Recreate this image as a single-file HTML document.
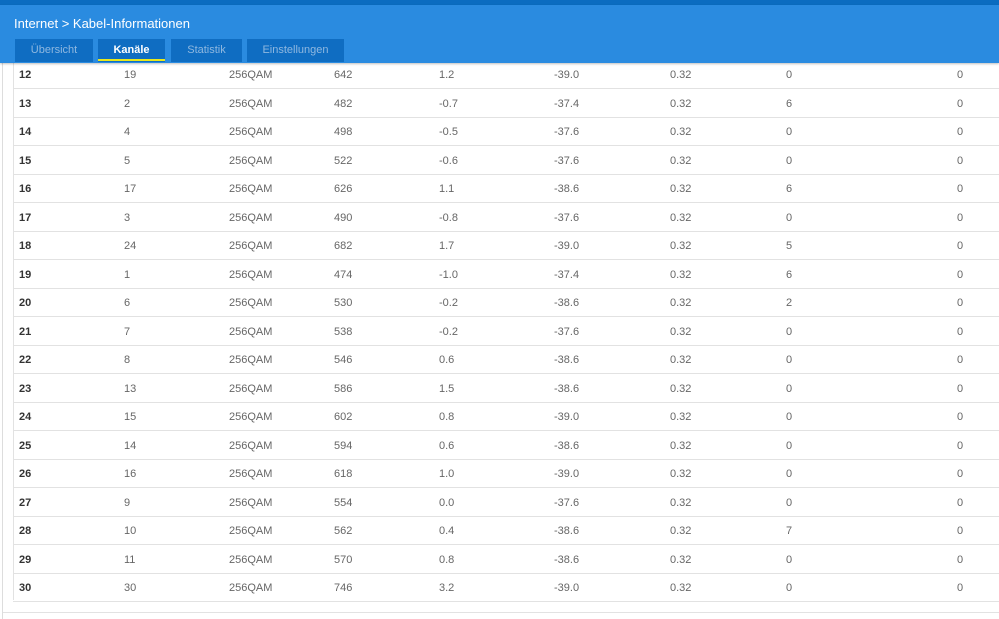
<!DOCTYPE html>
<html><head><style>
body{margin:0;width:999px;height:619px;overflow:hidden;background:#fff;font-family:"Liberation Sans",sans-serif;position:relative}
.top{position:absolute;left:0;top:0;width:999px;height:5px;background:#0b6cc0}
.hdr{position:absolute;left:0;top:5px;width:999px;height:58px;background:#2a8be0;box-shadow:0 1px 2px rgba(0,0,0,.25);z-index:2}
.title{position:absolute;left:14px;top:11px;color:#fff;font-size:13px}
.tab{position:absolute;top:34px;height:23px;background:#0f6dc2;color:#8fb8e0;font-size:11px;text-align:center;line-height:22px}
.tab.act{color:#fff;font-weight:bold}
.tab.act:after{content:"";position:absolute;left:0;right:0;bottom:1px;height:2px;background:#e8e81c}
.lft{position:absolute;left:2px;top:63px;width:1px;height:556px;background:#ddd}
.row{position:absolute;left:13px;width:986px;height:28px;border-bottom:1px solid #e2e2e2;font-size:11px;color:#666}
.row span{position:absolute;top:9px}
.row span:first-child{color:#333;font-weight:bold}
.tbl{position:absolute;left:13px;top:63px;width:1px;height:537px;background:#e2e2e2}
.bot{position:absolute;left:3px;top:612px;width:996px;height:1px;background:#e2e2e2}
</style></head><body>
<div class="top"></div>
<div class="hdr">
<div class="title">Internet &gt; Kabel-Informationen</div>
<div class="tab" style="left:15px;width:78px">Übersicht</div>
<div class="tab act" style="left:98px;width:67px">Kanäle</div>
<div class="tab" style="left:171px;width:71px">Statistik</div>
<div class="tab" style="left:247px;width:97px">Einstellungen</div>
</div>
<div class="lft"></div><div class="tbl"></div><div class="bot"></div>
<div id="rows"></div>
<script>
var d=[[12,19,642,"1.2","-39.0",0],[13,2,482,"-0.7","-37.4",6],[14,4,498,"-0.5","-37.6",0],[15,5,522,"-0.6","-37.6",0],[16,17,626,"1.1","-38.6",6],[17,3,490,"-0.8","-37.6",0],[18,24,682,"1.7","-39.0",5],[19,1,474,"-1.0","-37.4",6],[20,6,530,"-0.2","-38.6",2],[21,7,538,"-0.2","-37.6",0],[22,8,546,"0.6","-38.6",0],[23,13,586,"1.5","-38.6",0],[24,15,602,"0.8","-39.0",0],[25,14,594,"0.6","-38.6",0],[26,16,618,"1.0","-39.0",0],[27,9,554,"0.0","-37.6",0],[28,10,562,"0.4","-38.6",7],[29,11,570,"0.8","-38.6",0],[30,30,746,"3.2","-39.0",0]];
var xs=[6,111,216,321,426,541,657,773,944],h="";
d.forEach(function(r,i){var v=[r[0],r[1],"256QAM",r[2],r[3],r[4],"0.32",r[5],0];
h+='<div class="row" style="top:'+(60+i*28.5)+'px">';
v.forEach(function(t,j){h+='<span style="left:'+xs[j]+'px">'+t+'</span>'});h+='</div>';});
document.getElementById('rows').innerHTML=h;
</script>
</body></html>
